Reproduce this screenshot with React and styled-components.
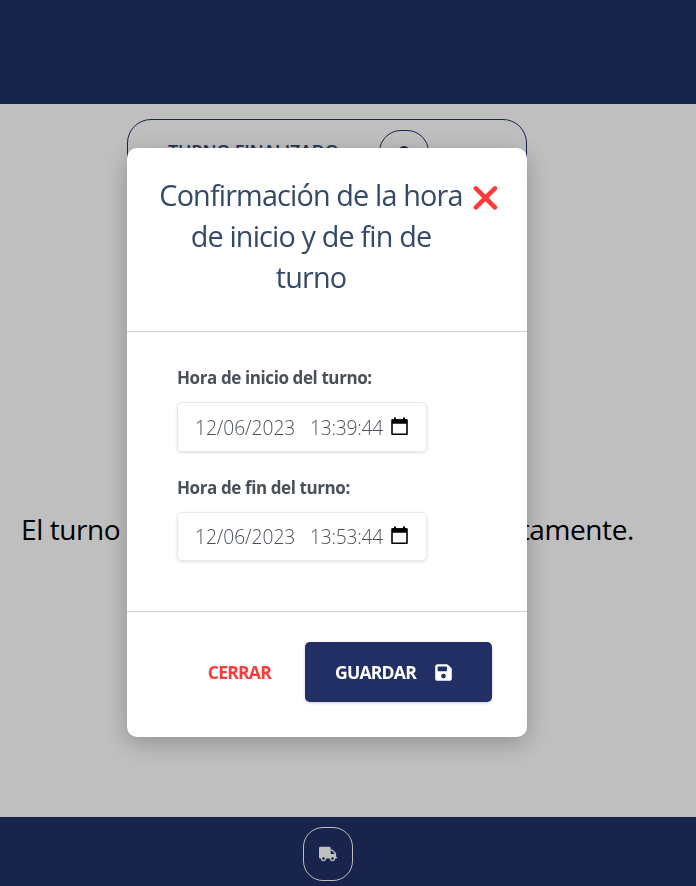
import React from "react";
import styled, { createGlobalStyle } from "styled-components";
import { FaTruck } from "react-icons/fa";
import { FaFloppyDisk } from "react-icons/fa6";

const GlobalStyle = createGlobalStyle`
  * { box-sizing: border-box; }
  body { margin: 0; overflow: hidden; font-family: "Segoe UI", "Open Sans", "Noto Sans", sans-serif; }
  button { font: inherit; }
`;

const Page = styled.div`
  display: grid;
  grid-template-rows: 104px 713px 69px;
  height: 886px;
  background: #fff;
`;

const Bar = styled.div`
  background: #223066;
`;

const Footer = styled(Bar)`
  display: flex;
  justify-content: center;
  padding: 10px 40px 0 0;
`;

const TruckButton = styled.button`
  display: flex;
  align-items: center;
  justify-content: center;
  width: 50px;
  height: 54px;
  padding: 0;
  border: 1px solid #fff;
  border-radius: 20px;
  background: transparent;
  color: #fff;
  font-size: 18px;
`;

const Main = styled.main`
  display: flex;
  flex-direction: column;
  padding: 15px 0 0;
`;

const StatusCard = styled.section`
  display: flex;
  align-items: flex-start;
  width: 400px;
  height: 70px;
  margin-left: 127px;
  padding: 10px 97px 0 40px;
  border: 1px solid #223066;
  border-radius: 24px;
  justify-content: space-between;
`;

const StatusText = styled.span`
  padding-top: 9px;
  color: #34496a;
  font-size: 18px;
  font-weight: 600;
  line-height: 24px;
  letter-spacing: -0.2px;
  white-space: nowrap;
`;

const StatusIcon = styled.span`
  display: flex;
  justify-content: center;
  flex: none;
  width: 50px;
  height: 54px;
  padding-top: 15px;
  border: 1px solid #223066;
  border-radius: 22px;
`;

const Message = styled.p`
  display: flex;
  justify-content: space-between;
  width: 613px;
  margin: 321px 0 0 21px;
  color: #000;
  font-size: 28px;
  line-height: 38px;
  letter-spacing: ${(p) => p.$tracking};
`;

const Overlay = styled.div`
  position: fixed;
  inset: 0;
  display: flex;
  align-items: flex-start;
  padding: 148px 0 0 127px;
  background: rgba(0, 0, 0, 0.25);
`;

const Dialog = styled.div`
  width: 400px;
  height: 589px;
  display: grid;
  grid-template-rows: 184px 280px 125px;
  border-radius: 10px;
  background: #fff;
  box-shadow: 0 6px 24px rgba(0, 0, 0, 0.25);
`;

const DialogHeader = styled.header`
  display: flex;
  align-items: flex-start;
  padding: 26px 29px 0 31px;
  border-bottom: 1px solid #cbd0d5;
`;

const Title = styled.h2`
  flex: none;
  width: 306px;
  margin: 0;
  color: #34496a;
  font-size: 28.8px;
  font-weight: 500;
  line-height: 41px;
  letter-spacing: -0.85px;
  text-align: center;
  white-space: nowrap;
`;

const CloseButton = styled.button`
  display: flex;
  margin: 11px 0 0 8px;
  padding: 0;
  border: 0;
  background: transparent;
`;

const Fields = styled.div`
  padding: 33px 50px 0;
  border-bottom: 1px solid #cbd0d5;
`;

const Label = styled.label`
  display: block;
  color: #495057;
  font-size: 17px;
  font-weight: 700;
  line-height: 26px;
  letter-spacing: -0.4px;
  white-space: nowrap;
`;

const DateField = styled.div`
  display: flex;
  align-items: center;
  width: 250px;
  height: ${(p) => p.$height}px;
  margin: 11px 0 23px;
  padding: 0 18px 0 17px;
  border: 1px solid #e6e8eb;
  border-radius: 5px;
  box-shadow: 0 1px 3px rgba(0, 0, 0, 0.12);
  color: #495057;
  font-size: 19.2px;
  font-weight: 300;
  white-space: nowrap;

  svg { margin-left: auto; flex: none; margin-top: -2px; }
`;

const DatePart = styled.span`
  width: ${(p) => p.$width}px;
  letter-spacing: ${(p) => p.$tracking}px;
`;

const Actions = styled.footer`
  display: flex;
  align-items: flex-start;
  justify-content: flex-end;
  padding: 30px 35px 0 0;
`;

const ActionButton = styled.button`
  display: flex;
  align-items: center;
  height: 60px;
  border: 0;
  border-radius: 5px;
  padding: 0 ${(p) => (p.$primary ? 39 : 34)}px 0 30px;
  justify-content: space-between;
  width: ${(p) => (p.$primary ? "187px" : "auto")};
  background: ${(p) => (p.$primary ? "#223066" : "transparent")};
  box-shadow: ${(p) => (p.$primary ? "0 1px 3px rgba(0,0,0,.2)" : "none")};
  color: ${(p) => (p.$primary ? "#fff" : "#fb3b3b")};
  font-size: 17.6px;
  font-weight: 700;
  letter-spacing: -0.8px;

  svg { font-size: 19px; }
`;

const CalendarIcon = () => (
  <svg width="17" height="19" viewBox="0 0 17 19" fill="none">
    <path d="M1 3h15v14.2H1z" stroke="#000" strokeWidth="1.6" strokeLinejoin="round" />
    <path d="M1 2.2h15v4.6H1zM3 .5h2v3H3zM12 .5h2v3h-2z" fill="#000" />
  </svg>
);

const DateTime = ({ label, date, time, height }) => (
  <>
    <Label>{label}</Label>
    <DateField $height={height}>
      <DatePart $width={115} $tracking={-0.05}>{date}</DatePart>
      <DatePart $width={79} $tracking={-0.25}>{time}</DatePart>
      <CalendarIcon />
    </DateField>
  </>
);

export default function App() {
  return (
    <>
      <GlobalStyle />
      <Page>
        <Bar />
        <Main>
          <StatusCard>
            <StatusText>TURNO FINALIZADO</StatusText>
            <StatusIcon>
              <svg width="20" height="20" viewBox="0 0 20 20" fill="#223066">
                <circle cx="10" cy="6" r="6" />
                <path d="M0 20c0-10 20-10 20 0z" />
              </svg>
            </StatusIcon>
          </StatusCard>
          <Message $tracking="-0.4px">
            <span>El turno</span>
            <span>ha finalizado</span>
            <span>correctamente.</span>
          </Message>
        </Main>
        <Footer>
          <TruckButton aria-label="Camión"><FaTruck /></TruckButton>
        </Footer>
      </Page>
      <Overlay>
        <Dialog role="dialog">
          <DialogHeader>
            <Title>
              Confirmación de la hora<br />de inicio y de fin de<br />turno
            </Title>
            <CloseButton aria-label="Cerrar">
              <svg width="26" height="26" viewBox="0 0 26 26" fill="none" stroke="#fb3b3b" strokeWidth="4.6" strokeLinecap="round">
                <path d="M3.9 3.4l19 19M22.9 3.4l-19 19" />
              </svg>
            </CloseButton>
          </DialogHeader>
          <Fields>
            <DateTime label="Hora de inicio del turno:" date="12/06/2023" time="13:39:44" height={50} />
            <DateTime label="Hora de fin del turno:" date="12/06/2023" time="13:53:44" height={49} />
          </Fields>
          <Actions>
            <ActionButton>CERRAR</ActionButton>
            <ActionButton $primary>
              GUARDAR <FaFloppyDisk />
            </ActionButton>
          </Actions>
        </Dialog>
      </Overlay>
    </>
  );
}
